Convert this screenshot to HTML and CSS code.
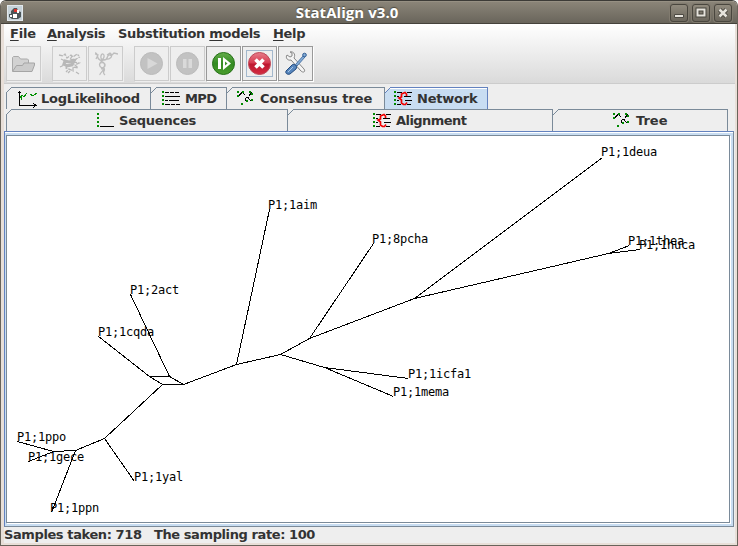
FILE: index.html
```html
<!DOCTYPE html>
<html lang="en">
<head>
<meta charset="utf-8">
<title>StatAlign v3.0</title>
<link rel="stylesheet" href="styles.css">
</head>
<body>
<svg class="defs" width="0" height="0" aria-hidden="true">
  <defs>
    <linearGradient id="green" x2="0" y2="1"><stop stop-color="#65ad4b"/><stop offset=".5" stop-color="#338b22"/><stop offset="1" stop-color="#4b9d2d"/></linearGradient>
    <linearGradient id="red" x2="0" y2="1"><stop stop-color="#e77e8b"/><stop offset=".48" stop-color="#d6394e"/><stop offset=".52" stop-color="#bd1730"/><stop offset="1" stop-color="#d42b40"/></linearGradient>
    <symbol id="i-tree" viewBox="0 0 17 15"><path d="M1 5.500l2-2 2-2M6 2l2 2M8.500 6.500h3M8.500 7v2l2 1M11 7l3 3M12 5l3-4" class="ink"/><path d="M0 0h2v2H0zM5 0h2v2H5zM0 4h2v2H0zM12 0h2v2h-2zM14 2h2v2h-2zM14 8h2v2h-2zM9 9h2v2H9zM4 12h2v2H4z" class="leaf"/></symbol>
    <symbol id="i-align" viewBox="0 0 19 15"><path d="M3 1.500h5M13 1.500h5M3 5.500h2M10 5.500h7M3 9.500h2M11 9.500h7M3 13.500h4M13 13.500h4" class="ink"/><path d="M0 0h2v2H0zM0 4h2v2H0zM0 8h2v2H0zM0 12h2v2H0z" class="leaf"/><path d="M12.500 5V3L11 1.500 7.500 3v3L5 7l2.500 2v3l2 1.500h2l1.500-2" class="redline"/></symbol>
  </defs>
</svg>
<div class="window">
  <header class="titlebar">
    <svg class="java" width="16" height="16" viewBox="0 0 16 16"><path d="M0 0h16v16H0z" fill="#e2e8ec"/><path d="M1 1h14v14H1z" fill="#c6d2d9"/><path d="M4 6l3-3h3l1 3 3 1v5l-3 2H5l-3-2V9h2z" fill="#4b5559"/><path d="M6 9h4v4H6zM10 5h2v3h-2z" fill="#fff"/><path d="M7 4h3v3H7z" fill="#d9332c"/><path d="M3 10h2v2H3z" fill="#fff"/></svg>
    <span class="title">StatAlign v3.0</span>
    <div class="controls">
      <span class="control"><svg width="18" height="18"><path d="M4.500 10.500h9v3h-9z" fill="#e6e3dc" stroke="#4d4a43"/></svg></span>
      <span class="control"><svg width="18" height="18"><path d="M5.500 5.500h7v6h-7z" fill="none" stroke="#49463e" stroke-width="4"/><path d="M5.500 5.500h7v6h-7z" fill="none" stroke="#e6e3dc" stroke-width="2"/></svg></span>
      <span class="control"><svg width="18" height="18"><path d="M5.500 5.500l7 7m0-7l-7 7" stroke="#49463e" stroke-width="4.500"/><path d="M5.500 5.500l7 7m0-7l-7 7" stroke="#e6e3dc" stroke-width="2.600"/></svg></span>
    </div>
  </header>
  <main class="content">
    <div class="head">
      <nav class="menu"><span class="m-file"><u>F</u>ile</span><span class="m-analysis"><u>A</u>nalysis</span><span class="m-models">Substitution <u>m</u>odels</span><span class="m-help"><u>H</u>elp</span></nav>
      <div class="toolbar">
        <button class="tool off"><svg width="25" height="25" viewBox="0 0 25 25"><path d="M1.500 20V6.500l1-1h5l2 2.500h7l1 1v3" fill="#d2d2d2" stroke="#aaa"/><path d="M1.500 20.500l4-6h6l1.500-2.500h10.500v2l-2.500 6.500z" fill="#cbcbcb" stroke="#a5a5a5"/></svg></button>
        <i class="gap"></i>
        <button class="tool off"><svg width="25" height="25" viewBox="0 0 25 25" fill="none" stroke="#b8b8b8"><path d="M2 4l4 1 2-2 2 4 4-3 2 2 4-3 2 2M4 8l4 2-2 4h5l-2 3 5 2M15 5l-2 4 6-1-3 3 6 1-4 2 3 3-5-1v4l-4-2-3 3M3 16l4-2m4 8l2-2m6 1l3 2M17 9l6-3" stroke-width="1.300" stroke-dasharray="4 1"/><path d="M8 10l4 1 5-1-2 4-5 1-3-2z" stroke-width="3"/></svg></button>
        <button class="tool off"><svg width="25" height="25" viewBox="0 0 25 25" fill="none" stroke="#bdbdbd" stroke-width="1.300"><path d="M2 2c4 0 1 6 5 7s5-5 3-6-4 6 1 6 2-6 6-5-1 5-4 4M11 8c-5 4-6 7-2 9s-3 5-2 7M7 9c7 4 5 8 1 8m-1-5c6-2 7 4 1 6m4 6c-4-3 1-4-1-7M14 4l3-2 2 2 2-2 4 1M2 3l3 1-2 4"/></svg></button>
        <i class="gap"></i>
        <button class="tool off"><svg width="25" height="25"><circle cx="12.500" cy="12.500" r="11" fill="#c2c2c2" stroke="#bbb"/><path d="M8.500 7v11l10-5.500z" fill="#d8d8d8"/></svg></button>
        <button class="tool off"><svg width="25" height="25"><circle cx="12.500" cy="12.500" r="11" fill="#c2c2c2" stroke="#bbb"/><path d="M8 8h3.500v9H8zM13.500 8H17v9h-3.500z" fill="#dadada"/></svg></button>
        <button class="tool"><svg width="25" height="25"><circle cx="12.500" cy="12.500" r="11" fill="url(#green)" stroke="#267118"/><path d="M7 7h3v11H7zM12 6v13l8-6.500z" fill="#fff"/><path d="M14 10.500v4l2.500-2z" fill="#3c902a"/></svg></button>
        <button class="tool focus"><svg width="25" height="25"><circle cx="12.500" cy="12.500" r="11" fill="url(#red)" stroke="#bd4857"/><path d="M8.500 8.500l8 8m0-8l-8 8" stroke="#fff" stroke-width="3.600"/></svg></button>
        <button class="tool"><svg width="25" height="25" viewBox="0 0 25 25"><path d="M4 4l3 2 2-1V2L7 1c3-1 6 2 4 6l10 11c2 3-1 4-3 2L8 9C5 10 2 7 4 4z" fill="#f4f4f4" stroke="#868686"/><path d="M12.500 13.500l8-9 1.500 1.500-8 9z" fill="#85acd5" stroke="#4c76a9"/><circle cx="21.500" cy="4" r="1.800" fill="#85acd5" stroke="#315d94"/><path d="M3 20l6-6c2-2 6 1 4 4l-6 5c-3 1-5-1-4-3z" fill="#5685bd" stroke="#234b7e"/><path d="M5 21l5-5" stroke="#aac8e6"/></svg></button>
      </div>
    </div>
    <div class="tabs">
      <div class="row upper">
        <div class="tab t-log"><svg width="19" height="18" viewBox="0 0 19 18"><path d="M1.500 1v14.500H18M0 2.500h3M15 13l3 2.500-3 2" class="ink"/><path d="M2 8l2-3 2 2 3-4M12 4l3 2 4-3M3 7l1 3" class="leafline"/></svg><span>LogLikelihood</span></div>
        <div class="tab t-mpd"><svg width="19" height="15" viewBox="0 0 19 15"><path d="M3 1.500h4M8 1.500h4M13 1.500h4M3 5.500h15M3 9.500h3M7 9.500h10M3 13.500h5M9 13.500h4M14 13.500h4" class="ink"/><path d="M0 0h2v2H0zM0 4h2v2H0zM0 8h2v2H0zM0 12h2v2H0z" class="leaf"/></svg><span>MPD</span></div>
        <div class="tab t-cons"><svg width="17" height="15"><use href="#i-tree"/></svg><span>Consensus tree</span></div>
        <div class="tab t-net selected"><svg width="19" height="15"><use href="#i-align"/></svg><span>Network</span></div>
      </div>
      <div class="row lower">
        <div class="tab t-seq"><svg width="19" height="15"><path d="M0 0h2v2H0zM0 4h2v2H0zM0 8h2v2H0zM0 12h2v2H0z" class="leaf"/><path d="M3 13.500h14" class="ink"/></svg><span>Sequences</span></div>
        <div class="tab t-align"><svg width="19" height="15"><use href="#i-align"/></svg><span>Alignment</span></div>
        <div class="tab t-tree"><svg width="17" height="15"><use href="#i-tree"/></svg><span>Tree</span></div>
      </div>
    </div>
    <section class="pane">
      <svg class="network" width="722" height="386" viewBox="7 136 722 386">
        <g class="edges">
          <path d="M602 157L414 298L309 338L373 243M414 298L608 253L629 245M608 253L640 249M309 338L280 354L324 367L408 378M324 367L393 396M280 354L236 364L269 209M236 364L183 384L169 376L130 294M169 376H149L98 336M149 376L162 384H183M162 384L104 438L134 481M104 438L75 450L53 451L17 441M53 451L28 461M75 450L51 512"/>
        </g>
        <g class="labels">
          <text x="601" y="156">P1;1deua</text><text x="628" y="245">P1;1thea</text><text x="639" y="249">P1;1huca</text>
          <text x="268" y="209">P1;1aim</text><text x="372" y="243">P1;8pcha</text><text x="130" y="294">P1;2act</text>
          <text x="98" y="336">P1;1cqda</text><text x="408" y="378">P1;1icfa1</text><text x="393" y="396">P1;1mema</text>
          <text x="17" y="441">P1;1ppo</text><text x="28" y="461">P1;1gece</text><text x="134" y="481">P1;1yal</text><text x="50" y="512">P1;1ppn</text>
        </g>
      </svg>
    </section>
    <footer class="status">Samples taken: 718 &nbsp; The sampling rate: 100</footer>
  </main>
</div>
</body>
</html>
```
FILE: styles.css
```css
* { box-sizing: border-box; }
body { margin: 0; background: #fff; font: bold 13px "DejaVu Sans", sans-serif; color: #333; overflow: hidden; }
svg { display: block; flex: none; }
.defs { position: absolute; }
.window { width: 738px; height: 546px; display: flex; flex-direction: column; border: 1px solid #69645b; border-top-color: #3c3b37; border-radius: 6px 6px 0 0; overflow: hidden; background: #e8dfd8; }
.titlebar { height: 23px; flex: none; display: grid; grid-template-columns: 76px 1fr 76px; align-items: center; background: linear-gradient(#8a8478, #69655b); border-bottom: 1px solid #45423b; border-top: 1px solid #969083; }
.java { margin-left: 6px; }
.title { text-align: center; color: #fff; font: bold 15px/21px "Open Sans", sans-serif; letter-spacing: .05px; padding-right: 44px; text-shadow: 0 -1px 1px #4b483f; }
.controls { display: flex; gap: 4px; margin-left: 9px; }
.control { width: 18px; height: 18px; border: 1px solid #49463e; border-radius: 3px; background: linear-gradient(#918b7e, #6b665c); box-shadow: 0 0 0 1px #817b6f; }
.control svg { margin: -1px; }
.content { flex: 1; margin: 0 2px 2px 3px; background: #eee; display: flex; flex-direction: column; min-height: 0; }
.head { height: 60px; flex: none; background: linear-gradient(#fff, #dadada); border-bottom: 1px solid #ccc; }
.menu { height: 22px; display: flex; padding-left: 6px; line-height: 19px; white-space: nowrap; letter-spacing: -.34px; }
.menu u { text-decoration-thickness: 1px; text-underline-offset: 2px; }
.m-file { width: 37px; letter-spacing: -.2px; }
.m-analysis { width: 71px; }
.m-models { width: 155px; letter-spacing: -.3px; }
.toolbar { display: flex; gap: 1px; padding-left: 2px; }
.gap { width: 9px; }
.tool { width: 35px; height: 35px; padding: 4px; border: 1px solid #999; background: #eee; box-shadow: 1px 1px #fff; }
.tool.off { border-color: #ccc; box-shadow: 1px 1px #eee; }
.tool.focus svg { outline: 1px solid #a3b8cc; }
.tabs { padding: 3px 0 0 2px; height: 47px; flex: none; }
.row { display: flex; height: 22px; }
.tab { height: 22px; display: flex; align-items: center; gap: 4px; border-top: 1px solid #7a8a99; border-right: 1px solid #7a8a99; position: relative; white-space: nowrap; letter-spacing: -.22px; }
.tab:first-child { border-left: 1px solid #7a8a99; }
.tab::before { content: ""; position: absolute; left: 0; top: -1px; width: 6px; height: 6px; background: linear-gradient(135deg, #eee 43%, #7a8a99 43% 56%, transparent 56%); }
.tab:first-child::before { left: -1px; }
.t-log { width: 145px; padding-left: 11px; }
.t-mpd { width: 76px; padding-left: 11px; letter-spacing: -.6px; }
.t-cons { width: 158px; padding-left: 10px; gap: 6px; letter-spacing: -.06px; }
.t-net { width: 103px; padding-left: 9px; }
.tab.selected { background: #c8ddf2; border-color: #6382bf; box-shadow: inset 0 1px #fff; }
.tab.selected::before { background: linear-gradient(135deg, #eee 43%, #6382bf 43% 56%, transparent 56%); }
.t-seq { width: 282px; padding-left: 90px; gap: 3px; }
.t-align { width: 265px; padding-left: 85px; letter-spacing: -.6px; letter-spacing: -.55px; }
.t-tree { width: 175px; padding-left: 60px; gap: 6px; letter-spacing: 0; }
.ink { fill: none; stroke: #000; shape-rendering: crispEdges; }
.leaf { fill: #008a00; shape-rendering: crispEdges; }
.leafline { fill: none; stroke: #009000; shape-rendering: crispEdges; }
.redline { fill: none; stroke: #f00000; stroke-width: 1.7; }
.pane { height: 396px; flex: none; width: 730px; border: 1px solid #7a8a99; border-top-color: #6382bf; border-left-color: #6382bf; background: #c8ddf2; padding: 3px 3px 2px 1px; box-shadow: inset 0 1px #fff; }
.network { background: #fff; border: 1px solid #7a8a99; width: 724px; height: 388px; box-shadow: 1px 1px #fff; }
.edges { fill: none; stroke: #000; shape-rendering: crispEdges; transform: translate(.5px, .5px); }
.labels { font: 12px "DejaVu Sans Mono", monospace; fill: #000; letter-spacing: -.22px; }
.status { line-height: 16px; white-space: pre; letter-spacing: -.4px; }
```
